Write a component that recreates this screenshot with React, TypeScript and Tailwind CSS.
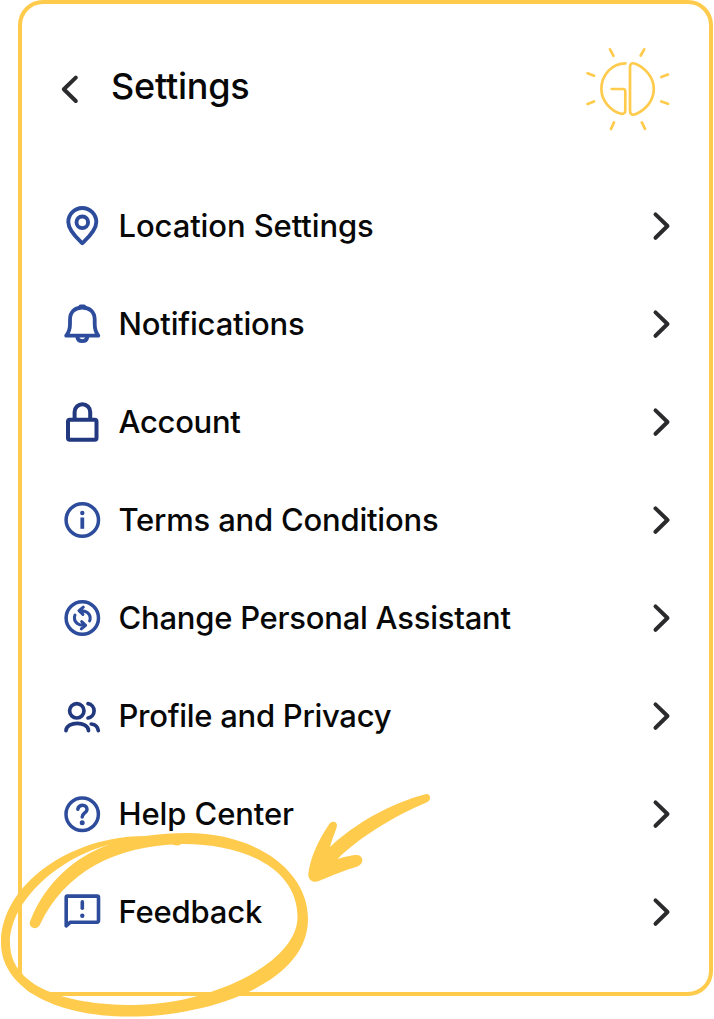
import type { ReactNode } from "react";

const blue = "#2e4c9c";
const navy = "#22397f";

function Icon({ color = blue, width = 3.3, children }: { color?: string; width?: number; children: ReactNode }) {
  return (
    <svg
      className="h-10 w-10 shrink-0 overflow-visible"
      viewBox="0 0 40 40"
      fill="none"
      stroke={color}
      strokeWidth={width}
      strokeLinecap="round"
      strokeLinejoin="round"
    >
      {children}
    </svg>
  );
}

const rows: { label: string; text: string; icon: ReactNode }[] = [
  {
    label: "Location Settings",
    text: "tracking-[-0.1px]",
    icon: (
      <Icon width={3.9}>
        <path d="M20.3 37.2C17 34 6.3 25 6.3 16A14 14 0 0 1 34.3 16C34.3 25 23.6 34 20.3 37.2Z" />
        <circle cx="20.3" cy="16.3" r="5.8" />
      </Icon>
    ),
  },
  {
    label: "Notifications",
    text: "tracking-[-0.18px]",
    icon: (
      <Icon width={3.8}>
        <path d="M4.2 31.7C7.2 28 8 25 8 20V15.5C8 8 13 3.5 20.3 3.5S32.7 8 32.7 15.5V20C32.7 25 33.5 28 36.3 31.7Z" />
        <path d="M18.5 2.3H22.1" />
        <path d="M15.4 33.5C16.4 38.4 24.2 38.4 25.2 33.5" />
      </Icon>
    ),
  },
  {
    label: "Account",
    text: "tracking-[-0.28px]",
    icon: (
      <Icon color={navy} width={4}>
        <rect x="6" y="17.8" width="28.5" height="20" rx="1.8" />
        <path d="M12.6 17V10A7.8 7.8 0 0 1 28.2 10V17" />
      </Icon>
    ),
  },
  {
    label: "Terms and Conditions",
    text: "tracking-[-0.21px]",
    icon: (
      <Icon width={3.5}>
        <circle cx="20.3" cy="20" r="16.2" />
        <path d="M20.3 17.5V28.8" strokeLinecap="butt" strokeWidth="3.8" />
        <circle cx="20.3" cy="13" r="2.2" fill={blue} stroke="none" />
      </Icon>
    ),
  },
  {
    label: "Change Personal Assistant",
    text: "tracking-[-0.24px]",
    icon: (
      <Icon width={3.5}>
        <circle cx="20.3" cy="20" r="16.2" />
        <g strokeWidth="3">
          <path d="M21.3 9.1L17 12.7L20.9 16.4M18 12.7C24 12.2 28.2 15.5 28.2 20.2C28.2 21.2 28 22 27.6 22.9" />
          <path d="M19.3 30.9L23.6 27.3L19.7 23.6M22.6 27.3C16.6 27.8 12.4 24.5 12.4 19.8C12.4 18.8 12.6 18 13 17.1" />
        </g>
      </Icon>
    ),
  },
  {
    label: "Profile and Privacy",
    text: "tracking-[-0.28px]",
    icon: (
      <Icon color={navy} width={3.7}>
        <circle cx="14.8" cy="14.8" r="7.2" />
        <path d="M26 7.6A7.3 7.3 0 0 1 26 22" />
        <path d="M4 34.6C4.5 24.9 26 24.9 26.5 34.6" />
        <path d="M29.2 28C33 28.4 35.8 31 36.3 34.6" />
      </Icon>
    ),
  },
  {
    label: "Help Center",
    text: "tracking-[-0.1px]",
    icon: (
      <Icon width={3.5}>
        <circle cx="20.2" cy="20.2" r="16.2" />
        <path d="M15.8 15.2C16.5 9.8 25 9.8 25 15.4C25 19 20.2 19 20.2 23" />
        <circle cx="20.2" cy="28.7" r="2.5" fill={blue} stroke="none" />
      </Icon>
    ),
  },
  {
    label: "Feedback",
    text: "tracking-[-0.18px]",
    icon: (
      <Icon width={3.6}>
        <path d="M5.4 4.1H35Q36.5 4.1 36.5 5.6V28.6Q36.5 30.2 35 30.2H8.4L4.2 33.8V5.6Q4.2 4.1 5.4 4.1Z" />
        <path d="M20.3 9.9V16.2" />
        <circle cx="20.3" cy="23.7" r="2.2" fill={blue} stroke="none" />
      </Icon>
    ),
  },
];

function SunLogo() {
  return (
    <svg
      className="h-24 w-24"
      viewBox="0 0 96 96"
      fill="none"
      stroke="#ffcb4d"
      strokeWidth="2.7"
      strokeLinecap="round"
      strokeLinejoin="round"
    >
      <path d="M45.5 23.4C32 23.4 21.4 35 21.4 49C21.4 62 32 71.5 41 73.8C43.5 74.3 45.3 73 45.3 70.5V51.5Q45.3 49 43 49H31.7" />
      <path d="M50 27V70.5C50 74.4 52.5 75.6 56 74C66 69.5 73.8 60.5 73.8 49C73.8 38 66 28.5 56 24C52.5 22.4 50 23.5 50 27Z" />
      <path d="M30 9.3L33.5 15.8M64.2 9.3L60.7 15.5M7.6 33.2L14 35.7M7.6 64L14 61.5M34 82.4L31 89M61.8 82.4L65 88.8M81.3 37L88 34.6M81.3 61.5L88 63.8" />
    </svg>
  );
}

export default function App() {
  return (
    <main className="relative h-[1019px] w-[714px] overflow-hidden bg-white pl-[18px] font-['Inter','Liberation_Sans',sans-serif] font-medium text-[#080808]">
      <section className="h-[996px] w-[695px] rounded-[25px] border-4 border-[#ffcb4d]">
        <header className="mb-[5px] flex h-[168px] items-center pr-[33px] pl-9">
          <button aria-label="Back" className="h-8 w-6">
            <svg className="h-8 w-6" viewBox="0 0 24 32" fill="none" stroke="#2b2b2d" strokeWidth="4" strokeLinecap="round" strokeLinejoin="round">
              <path d="M17.8 5.6L5.8 17.2L17.8 29" />
            </svg>
          </button>
          <h1 className="mb-1 ml-[29px] text-[36px] leading-[44px] tracking-[-0.25px]">Settings</h1>
          <div className="ml-auto">
            <SunLogo />
          </div>
        </header>
        <ul>
          {rows.map((row) => (
            <li key={row.label} className="flex h-[98px] items-center pr-[37px] pl-10">
              {row.icon}
              <span className={`ml-[16.5px] text-[31px] leading-10 whitespace-nowrap ${row.text}`}>{row.label}</span>
              <svg className="ml-auto h-8 w-6" viewBox="0 0 24 32" fill="none" stroke="#2b2b2d" strokeWidth="4" strokeLinecap="round" strokeLinejoin="round">
                <path d="M7.5 4.4L19.5 16L7.5 27.8" />
              </svg>
            </li>
          ))}
        </ul>
      </section>
      <svg className="pointer-events-none absolute inset-0" width="714" height="1019" viewBox="0 0 714 1019" fill="#ffcb4d">
        <path d="M187 833C255 833 308 870 308 919C308 985 205 1016.6 130 1016.6C50 1016.6 1 985 1 943C1 885 70 836 145 836C159 834 173 833 187 833ZM110 844.5C60 857 10 900 10 943C10 985 62 1005 133 1005C210 1005 297.5 963 297.5 917C297.5 868 243 843 180 844C115 846 65 872 40 924.5C37 931 28 928 30 921.5C45 883 75 856 110 844.5Z" fillRule="evenodd" />
        <path d="M165 840L180 839L181 844C179 846 176 845.5 174 845Z" />
        <path d="M425.5 794.2C391 803 354 824 330 847C332.5 838 335 833 336.8 826.5C338 821.5 332 820 329.3 824C318 840 310 859 308.3 874C308 880 313 883 318 881.3C332 875.5 343 871 356 867C360 865.5 362.5 863 362.3 860C362 855.5 358 854.5 353 855.2C348 856 343 857 337.5 859C360 837 394 816 427 802.3C432 800 430.5 793 425.5 794.2Z" />
      </svg>
    </main>
  );
}
